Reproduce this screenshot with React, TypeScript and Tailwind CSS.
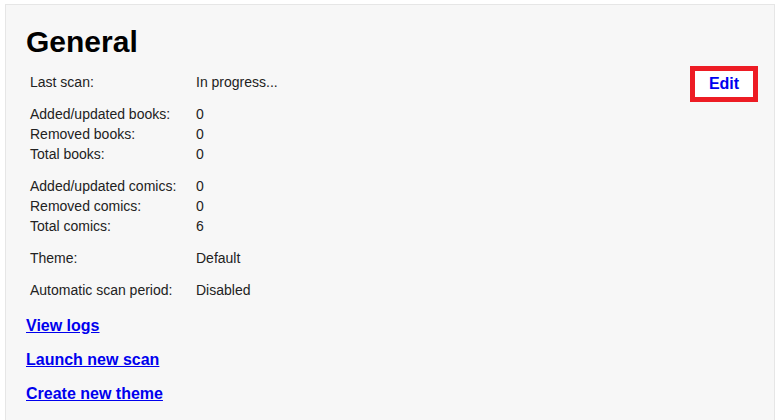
const groups: [string, string][][] = [
  [["Last scan:", "In progress..."]],
  [
    ["Added/updated books:", "0"],
    ["Removed books:", "0"],
    ["Total books:", "0"],
  ],
  [
    ["Added/updated comics:", "0"],
    ["Removed comics:", "0"],
    ["Total comics:", "6"],
  ],
  [["Theme:", "Default"]],
  [["Automatic scan period:", "Disabled"]],
];

const links = ["View logs", "Launch new scan", "Create new theme"];

export default function App() {
  return (
    <div
      className="min-h-[420px] bg-white pl-[5px] pt-[4px]"
      style={{ fontFamily: '"Liberation Sans", Arial, sans-serif' }}
    >
      <div className="h-[430px] w-[770px] border border-[#e6e6e6] bg-[#f7f7f7] pl-5 pr-4 pt-5">
        <h1 className="text-[30px] font-bold leading-[34px] text-black">General</h1>

        <div className="mt-[7px] flex items-start justify-between">
          <div className="pt-[6px] text-[14px] leading-5 text-[#222]">
            {groups.map((rows, gi) => (
              <div key={gi} className={gi > 0 ? "mt-3" : ""}>
                {rows.map(([label, value]) => (
                  <div key={label} className="flex">
                    <span className="w-[170px] pl-1">{label}</span>
                    <span>{value}</span>
                  </div>
                ))}
              </div>
            ))}
          </div>

          <button className="h-9 w-[68px] border-[5px] border-[#ed1c24] bg-white text-[16px] font-bold text-[#0000ee]">
            Edit
          </button>
        </div>

        <div className="mt-[17px] flex flex-col items-start gap-4">
          {links.map((l) => (
            <a key={l} href="#" className="text-[16px] font-bold leading-[18px] text-[#0000ee] underline">
              {l}
            </a>
          ))}
        </div>
      </div>
    </div>
  );
}
